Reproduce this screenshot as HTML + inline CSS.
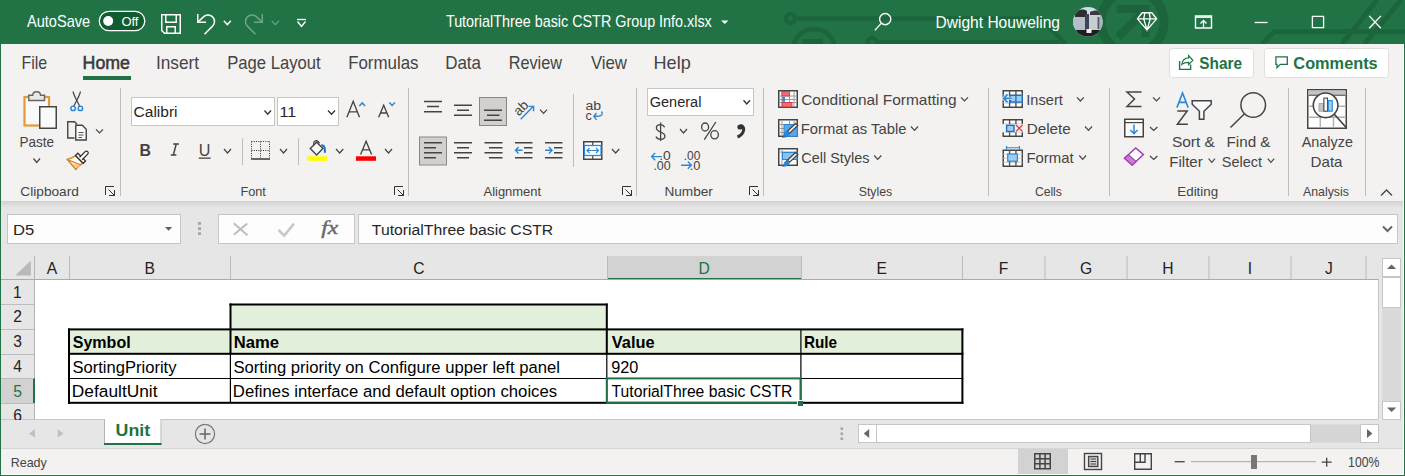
<!DOCTYPE html>
<html><head><meta charset="utf-8"><style>
html,body{margin:0;padding:0;width:1405px;height:476px;overflow:hidden;background:#f3f2f1}
svg{position:absolute;left:0;top:0;display:block}
text{font-family:"Liberation Sans",sans-serif;white-space:pre}
</style></head><body>
<svg width="1405" height="476" viewBox="0 0 1405 476">
<rect x="0" y="0" width="1405" height="44" fill="#217346" />
<g stroke="#1c643b" stroke-width="4.5" fill="none"><circle cx="790.5" cy="18.5" r="4.5"/><path d="M795,18.5 H1030"/><circle cx="814" cy="50" r="21"/><circle cx="872" cy="42.5" r="4.5"/><path d="M877,42.5 H1060"/><path d="M1040,18.5 L1066,44"/></g>
<rect x="802" y="39" width="21" height="5" fill="#1c643b"/>
<g stroke="#1c643b" fill="none"><circle cx="1132.5" cy="22" r="31.5" stroke-width="9"/><path d="M1116.7,9 H1145.5 V37" stroke-width="8"/><path d="M1145,11 L1118,37" stroke-width="8"/><path d="M1262,44 L1274,31.7 H1405" stroke-width="4.7"/><path d="M1342,44 L1377,0" stroke-width="5"/><path d="M1364.5,44 L1401,0" stroke-width="5"/></g>
<text x="27.00" y="26.80" font-size="15.70" textLength="63.18" lengthAdjust="spacingAndGlyphs" fill="#fff" font-weight="400">AutoSave</text>
<rect x="99.3" y="11.3" width="45.5" height="19.4" rx="9.7" fill="#0f5c30" stroke="#fff" stroke-width="1.3"/>
<circle cx="108.2" cy="21" r="5" fill="#fff"/>
<text x="121.42" y="26.10" font-size="13.00" textLength="17.02" lengthAdjust="spacingAndGlyphs" fill="#fff" font-weight="400">Off</text>
<path d="M161.75,14.75 H180.25 V33.25 H164.5 L161.75,30.5 Z" stroke="#fff" stroke-width="1.5" fill="none" />
<path d="M165.75,14.75 V22.25 H176.25 V14.75" stroke="#fff" stroke-width="1.5" fill="none" />
<path d="M166.75,33.25 V26.75 H175.25 V33.25" stroke="#fff" stroke-width="1.5" fill="none" />
<path d="M197.75,14 V22.25 H206" stroke="#fff" stroke-width="1.5" fill="none" />
<path d="M198.5,21.5 L203.4,16.9 A6.5,6.5 0 0 1 212.6,26.1 L204.5,34.2" stroke="#fff" stroke-width="1.5" fill="none" />
<path d="M223.8,20.8 L227.35000000000002,24.6 L230.9,20.8" stroke="#fff" stroke-width="1.4" fill="none" />
<path d="M262.25,14 V22.25 H254" stroke="#6fa587" stroke-width="1.5" fill="none" />
<path d="M261.5,21.5 L256.6,16.9 A6.5,6.5 0 0 0 247.4,26.1 L255.5,34.2" stroke="#6fa587" stroke-width="1.5" fill="none" />
<path d="M271.7,20.8 L275.35,24.6 L279,20.8" stroke="#6fa587" stroke-width="1.2" fill="none" />
<path d="M297,19.5 H306" stroke="#fff" stroke-width="1.3" fill="none" />
<path d="M297.5,21.5 L301.5,26.5 L305.5,21.5" stroke="#fff" stroke-width="1.4" fill="none" />
<text x="445.91" y="27.00" font-size="15.70" textLength="265.83" lengthAdjust="spacingAndGlyphs" fill="#fff" font-weight="400">TutorialThree basic CSTR Group Info.xlsx</text>
<path d="M721,20.5 H728.5 L724.75,24 Z" fill="#fff"/>
<circle cx="885.2" cy="19.1" r="5.6" stroke="#fff" stroke-width="1.4" fill="none"/>
<path d="M881.2,23.4 L874.8,30.4" stroke="#fff" stroke-width="1.4" fill="none" />
<text x="935.56" y="27.90" font-size="15.70" textLength="124.44" lengthAdjust="spacingAndGlyphs" fill="#fff" font-weight="400">Dwight Houweling</text>
<defs><clipPath id="av"><circle cx="1087.9" cy="21.8" r="14.7"/></clipPath><linearGradient id="avg" x1="0" y1="0" x2="0" y2="1"><stop offset="0" stop-color="#2b2f33"/><stop offset="0.25" stop-color="#a9c6d6"/><stop offset="0.45" stop-color="#c9d2d8"/><stop offset="0.8" stop-color="#8c949a"/><stop offset="1" stop-color="#1d1f22"/></linearGradient></defs>
<g clip-path="url(#av)"><rect x="1073" y="7" width="30" height="30" fill="#cfdde6"/><rect x="1073" y="15" width="30" height="16" fill="#aab6c0"/><path d="M1075,12 C1078,9 1084,9 1087,11 L1087,17 L1075,18 Z" fill="#2d2d2d"/><path d="M1090,12 C1094,10 1099,10 1102,12 L1102,15 L1090,15 Z" fill="#3a3a3a"/><rect x="1073" y="17" width="12" height="14" fill="#b4bec8"/><rect x="1085" y="14" width="4" height="17" fill="#3c4652"/><rect x="1089" y="15" width="11" height="15" fill="#c9cdd1"/><rect x="1097.5" y="17" width="2" height="12" fill="#59606a"/><rect x="1073" y="30" width="30" height="7" fill="#1e1e1e"/><rect x="1086.5" y="29" width="5" height="4" fill="#f0f0f0"/></g>
<path d="M1142.2,12.75 H1151.8 L1156.6,18.8 L1147,30 L1137.4,18.8 Z M1137.4,18.8 H1156.6 M1144.9,12.75 L1143.7,18.8 L1147,30 L1150.3,18.8 L1149.1,12.75" stroke="#fff" stroke-width="1.3" fill="none" />
<path d="M1195.5,16 H1211.5 V28 H1195.5 Z" stroke="#fff" stroke-width="1.4" fill="none" />
<path d="M1195.5,17.2 H1211.5" stroke="#fff" stroke-width="1.4" fill="none" />
<path d="M1203.5,27.5 V20.5 M1200.5,23.5 L1203.5,20.5 L1206.5,23.5" stroke="#fff" stroke-width="1.3" fill="none" />
<path d="M1254.7,22.5 H1267.6" stroke="#fff" stroke-width="1.3" fill="none" />
<path d="M1312.4,16.4 H1323.6 V27.6 H1312.4 Z" stroke="#fff" stroke-width="1.3" fill="none" />
<path d="M1369.2,15.9 L1380.9,28.2 M1380.9,15.9 L1369.2,28.2" stroke="#fff" stroke-width="1.3" fill="none" />
<rect x="0" y="44" width="1405" height="157" fill="#f3f2f1" />
<text x="21.42" y="69.00" font-size="18.20" textLength="25.72" lengthAdjust="spacingAndGlyphs" fill="#444" font-weight="400">File</text>
<text x="82.55" y="69.00" font-size="18.20" textLength="47.42" lengthAdjust="spacingAndGlyphs" fill="#3a3a3a" font-weight="400" stroke="#3a3a3a" stroke-width="0.55">Home</text>
<rect x="83" y="76" width="48" height="4" fill="#217346" />
<text x="155.95" y="69.00" font-size="18.20" textLength="43.16" lengthAdjust="spacingAndGlyphs" fill="#444" font-weight="400">Insert</text>
<text x="227.17" y="69.00" font-size="18.20" textLength="93.43" lengthAdjust="spacingAndGlyphs" fill="#444" font-weight="400">Page Layout</text>
<text x="348.15" y="69.00" font-size="18.20" textLength="70.40" lengthAdjust="spacingAndGlyphs" fill="#444" font-weight="400">Formulas</text>
<text x="445.14" y="69.00" font-size="18.20" textLength="35.90" lengthAdjust="spacingAndGlyphs" fill="#444" font-weight="400">Data</text>
<text x="508.70" y="69.00" font-size="18.20" textLength="53.28" lengthAdjust="spacingAndGlyphs" fill="#444" font-weight="400">Review</text>
<text x="590.92" y="69.00" font-size="18.20" textLength="36.08" lengthAdjust="spacingAndGlyphs" fill="#444" font-weight="400">View</text>
<text x="653.55" y="69.00" font-size="18.20" textLength="37.20" lengthAdjust="spacingAndGlyphs" fill="#444" font-weight="400">Help</text>
<rect x="1169.5" y="48.5" width="84" height="29" rx="3" fill="#fff" stroke="#e1dfdd"/>
<rect x="1264.5" y="48.5" width="124" height="29" rx="3" fill="#fff" stroke="#e1dfdd"/>
<path d="M1179.6,61 V69.4 H1190.6 V64.4" stroke="#217346" stroke-width="1.4" fill="none" />
<path d="M1181.8,64.4 C1182.6,59.6 1185,57.9 1188.6,57.9 V55.6 L1192.8,60.3 L1188.6,64.5 V62.3 C1185.6,62.3 1183.6,62.8 1181.8,64.4 Z" stroke="#217346" stroke-width="1.2" fill="none" />
<text x="1199.34" y="69.00" font-size="16.80" textLength="42.79" lengthAdjust="spacingAndGlyphs" fill="#217346" font-weight="700">Share</text>
<path d="M1275.9,56.9 H1287.3 V64.3 H1280.3 L1277,67.6 V64.3 H1275.9 Z" stroke="#217346" stroke-width="1.3" fill="none" />
<text x="1293.35" y="69.00" font-size="16.80" textLength="84.35" lengthAdjust="spacingAndGlyphs" fill="#217346" font-weight="700">Comments</text>
<rect x="24.5" y="97" width="24.5" height="28.5" fill="#fafafa" stroke="#e39a3b" stroke-width="2.2"/>
<path d="M28.75,100.5 V95.25 H32.75 C32.75,90.5 40.5,90.5 40.5,95.25 H44.5 V100.5 Z" stroke="#666" stroke-width="1.4" fill="#e8e8e8" />
<rect x="39.75" y="106.75" width="16.5" height="21.5" fill="#fafafa" stroke="#444" stroke-width="1.5"/>
<text x="19.52" y="146.50" font-size="14.40" textLength="34.62" lengthAdjust="spacingAndGlyphs" fill="#444" font-weight="400">Paste</text>
<path d="M33.5,158.5 L36.75,162.5 L40,158.5" stroke="#444" stroke-width="1.2" fill="none" />
<path d="M73,91.5 C74,96 77,100.5 79.8,106.5 M80.5,91.5 C79.5,96 76.5,100.5 73.7,106.5" stroke="#444" stroke-width="1.2" fill="none" />
<circle cx="73.1" cy="108.4" r="2.2" fill="#fff" stroke="#2b88d8" stroke-width="1.5"/><circle cx="80.4" cy="108.4" r="2.2" fill="#fff" stroke="#2b88d8" stroke-width="1.5"/>
<path d="M74.5,138 H67.75 V121.75 H74.5 L77,124.25" stroke="#444" stroke-width="1.4" fill="none" />
<path d="M75.75,125.25 H82.25 L86.25,129.25 V140 H75.75 Z" stroke="#444" stroke-width="1.4" fill="#fafafa" />
<path d="M78.5,132.5 H83.5 M78.5,135 H83.5 M78.5,137.5 H82" stroke="#555" stroke-width="1" fill="none" />
<path d="M96,129.3 L99.5,133 L103,129.3" stroke="#444" stroke-width="1.2" fill="none" />
<path d="M67.3,159.4 C70,158.5 73,157.5 75.5,155.8 L82.8,163.2 C80,165 77.5,167 75.8,169.2 Z" stroke="#d9822b" stroke-width="1.6" fill="#fff" />
<path d="M72.5,163.6 L80.2,165.2 L76.2,168.2 Z" stroke="none" stroke-width="0" fill="#f7c77a" />
<path d="M67.8,159.8 L80.8,164.8" stroke="#d9822b" stroke-width="1.3" fill="none" />
<path d="M75.5,155.5 L77.8,153.2 L85.5,161 L83.2,163.3 Z" stroke="#333" stroke-width="1.3" fill="#fff" />
<path d="M79.6,157.3 L85.2,151.6 C85.9,150.9 87,150.9 87.7,151.6 C88.4,152.3 88.4,153.4 87.7,154.1 L82.1,159.8" stroke="#333" stroke-width="1.3" fill="#fff" />
<text x="20.32" y="195.50" font-size="13.40" textLength="58.58" lengthAdjust="spacingAndGlyphs" fill="#444" font-weight="400">Clipboard</text>
<path d="M105.5,195 V186.5 H114" stroke="#333" stroke-width="1" fill="none" />
<path d="M108.5,189.5 L114.5,195.5 M114.5,190 V195.5 H109" stroke="#333" stroke-width="1" fill="none" />
<rect x="120" y="88" width="1" height="108" fill="#c0bebc" />
<rect x="131.5" y="97.5" width="143" height="28" fill="#fff" stroke="#c8c6c4"/>
<text x="133.62" y="117.30" font-size="15.30" textLength="43.95" lengthAdjust="spacingAndGlyphs" fill="#262626" font-weight="400">Calibri</text>
<path d="M264.5,110.5 L267.75,114.2 L271,110.5" stroke="#333" stroke-width="1.3" fill="none" />
<rect x="277.5" y="97.5" width="61" height="28" fill="#fff" stroke="#c8c6c4"/>
<text x="279.60" y="117.30" font-size="15.30" textLength="16.68" lengthAdjust="spacingAndGlyphs" fill="#262626" font-weight="400">11</text>
<path d="M328,110.5 L331.5,114.2 L335,110.5" stroke="#333" stroke-width="1.3" fill="none" />
<path d="M346.9,117.2 L353.2,101.3 L359.5,117.2 M349,111.8 H357.4" stroke="#444" stroke-width="1.35" fill="none" />
<path d="M359.3,105.9 L362.2,102.9 L365.1,105.9" stroke="#2b88d8" stroke-width="1.5" fill="none" />
<path d="M378.7,117.2 L383.7,105.2 L388.7,117.2 M380.5,113 H386.9" stroke="#444" stroke-width="1.35" fill="none" />
<path d="M389.3,102.5 L392.1,105.4 L394.9,102.5" stroke="#2b88d8" stroke-width="1.5" fill="none" />
<text x="139.47" y="155.60" font-size="17.00" textLength="11.48" lengthAdjust="spacingAndGlyphs" fill="#444" font-weight="700">B</text>
<path d="M173.2,144.1 H178.9 M176.2,144.1 L173.3,155.1 M170.8,155.1 H176.4" stroke="#444" stroke-width="1.5" fill="none" />
<text x="198.79" y="155.60" font-size="15.80" textLength="11.66" lengthAdjust="spacingAndGlyphs" fill="#444" font-weight="400">U</text>
<rect x="198.8" y="157.5" width="11.8" height="1.3" fill="#444" />
<path d="M224,149 L227.5,153 L231,149" stroke="#444" stroke-width="1.2" fill="none" />
<rect x="242" y="138" width="1" height="27" fill="#c0bebc" />
<g stroke="#333" stroke-width="1" stroke-dasharray="1,1.3" fill="none"><path d="M251.5,141.5 H269.5 M251.5,141.5 V158 M269.5,141.5 V158 M260.5,141.5 V158 M251.5,150.5 H269.5"/></g>
<rect x="251" y="158.2" width="19" height="1.6" fill="#444" />
<path d="M280,149 L283.5,153 L287,149" stroke="#444" stroke-width="1.2" fill="none" />
<rect x="298" y="138" width="1" height="27" fill="#c0bebc" />
<path d="M310.3,148.6 L316.6,142.3 L322.9,148.6 L316.6,154.9 Z" stroke="#444" stroke-width="1.4" fill="#fafafa" />
<path d="M313.8,145.1 V142.8 C313.8,140.6 316.8,140.2 318.2,141.6 L319.6,143.2" stroke="#444" stroke-width="1.3" fill="none" />
<path d="M321.3,145.3 C323.8,145.3 324.9,147.6 324.9,150 V152.8" stroke="#1e70c1" stroke-width="2" fill="none" />
<rect x="307" y="156.3" width="20" height="4.5" fill="#ffff00" />
<path d="M336,149 L339.65,153 L343.3,149" stroke="#444" stroke-width="1.2" fill="none" />
<path d="M360.6,154.6 L366.1,141.3 L371.6,154.6 M362.6,149.9 H369.6" stroke="#444" stroke-width="1.35" fill="none" />
<rect x="356" y="156.3" width="20" height="4.5" fill="#ff0000" />
<path d="M385,149 L388.5,153 L392,149" stroke="#444" stroke-width="1.2" fill="none" />
<text x="240.38" y="195.50" font-size="13.40" textLength="25.50" lengthAdjust="spacingAndGlyphs" fill="#444" font-weight="400">Font</text>
<path d="M394.5,195 V186.5 H403" stroke="#333" stroke-width="1" fill="none" />
<path d="M397.5,189.5 L403.5,195.5 M403.5,190 V195.5 H398" stroke="#333" stroke-width="1" fill="none" />
<rect x="408" y="88" width="1" height="108" fill="#c0bebc" />
<path d="M424,101.5 H442 M427,106.5 H439 M424,111.75 H442" stroke="#444" stroke-width="1.5" fill="none" />
<path d="M454,105.25 H472 M457,110.25 H469 M454,115.25 H472" stroke="#444" stroke-width="1.5" fill="none" />
<rect x="479.5" y="97.5" width="27" height="28" fill="#d2d0ce" stroke="#8a8886"/>
<path d="M484,110.25 H502 M487,115.25 H499.5 M484,120.25 H502" stroke="#444" stroke-width="1.5" fill="none" />
<text x="520.6" y="112.7" font-size="13.5" text-anchor="middle" fill="#444" transform="rotate(-45 520.6 107.7)">ab</text>
<path d="M520.7,119.3 L533.4,106.2 M528.5,106.4 H533.6 V111.2" stroke="#2b88d8" stroke-width="1.4" fill="none" />
<path d="M540,109.6 L543.5,113.4 L547,109.6" stroke="#444" stroke-width="1.2" fill="none" />
<rect x="573" y="94" width="1" height="73" fill="#c0bebc" />
<text x="585.44" y="109.90" font-size="12.50" textLength="15.66" lengthAdjust="spacingAndGlyphs" fill="#444" font-weight="400">ab</text>
<text x="585.49" y="119.70" font-size="12.50" textLength="6.32" lengthAdjust="spacingAndGlyphs" fill="#444" font-weight="400">c</text>
<path d="M601.5,111.5 C603.5,114 602,116.5 597,116.3 H594 M596.5,113 L593.8,116.2 L596.5,119.8" stroke="#2b88d8" stroke-width="1.4" fill="none" />
<rect x="419.5" y="137" width="27" height="28" fill="#d2d0ce" stroke="#8a8886"/>
<path d="M424,142.75 H442 M424,147.75 H436 M424,152.75 H442 M424,157.75 H436" stroke="#444" stroke-width="1.5" fill="none" />
<path d="M454,142.75 H472 M457,147.75 H469 M454,152.75 H472 M457,157.75 H469" stroke="#444" stroke-width="1.5" fill="none" />
<path d="M484.5,142.75 H502.5 M489,147.75 H502.5 M484.5,152.75 H502.5 M489,157.75 H502.5" stroke="#444" stroke-width="1.5" fill="none" />
<path d="M515,142.75 H532.5 M524,147.75 H532.5 M524,152.75 H532.5 M515,157.75 H532.5" stroke="#444" stroke-width="1.5" fill="none" />
<path d="M522.5,150.25 H515.5 M518.5,147 L515.5,150.25 L518.5,153.5" stroke="#2b88d8" stroke-width="1.4" fill="none" />
<path d="M545,142.75 H562.5 M554,147.75 H562.5 M554,152.75 H562.5 M545,157.75 H562.5" stroke="#444" stroke-width="1.5" fill="none" />
<path d="M545,150.25 H552 M549,147 L552,150.25 L549,153.5" stroke="#2b88d8" stroke-width="1.4" fill="none" />
<rect x="583.75" y="141.75" width="18" height="17.5" fill="#fff" stroke="#444" stroke-width="1.5"/>
<path d="M592.75,141.75 V145.5 M592.75,155.5 V159.25" stroke="#444" stroke-width="1.2" fill="none" />
<rect x="584.5" y="145.5" width="16.5" height="10" fill="#fff" stroke="#2b88d8" stroke-width="1.3"/>
<path d="M587,150.5 H598.5 M589.5,148 L587,150.5 L589.5,153 M596,148 L598.5,150.5 L596,153" stroke="#2b88d8" stroke-width="1.2" fill="none" />
<path d="M612,149 L615.65,153 L619.3,149" stroke="#444" stroke-width="1.2" fill="none" />
<text x="483.50" y="195.50" font-size="13.40" textLength="57.59" lengthAdjust="spacingAndGlyphs" fill="#444" font-weight="400">Alignment</text>
<path d="M622.5,195 V186.5 H631" stroke="#333" stroke-width="1" fill="none" />
<path d="M625.5,189.5 L631.5,195.5 M631.5,190 V195.5 H626" stroke="#333" stroke-width="1" fill="none" />
<rect x="636" y="88" width="1" height="108" fill="#c0bebc" />
<rect x="647.5" y="88.5" width="106" height="27" fill="#fff" stroke="#c8c6c4"/>
<text x="649.77" y="107.20" font-size="15.30" textLength="51.61" lengthAdjust="spacingAndGlyphs" fill="#262626" font-weight="400">General</text>
<path d="M743.5,100.3 L746.75,104 L750,100.3" stroke="#333" stroke-width="1.3" fill="none" />
<path d="M664.6,127.3 C663.6,125.3 662.2,124.6 660.4,124.6 C657.9,124.6 656.4,126.1 656.4,128.1 C656.4,132.9 664.9,131.3 664.9,136 C664.9,138.2 663,139.3 660.5,139.3 C658.4,139.3 656.8,138.4 655.9,136.6 M660.6,122.6 V141" stroke="#444" stroke-width="1.3" fill="none" />
<path d="M680,129 L683.5,133 L687,129" stroke="#444" stroke-width="1.2" fill="none" />
<ellipse cx="705.1" cy="127" rx="3.5" ry="4" fill="none" stroke="#444" stroke-width="1.3"/>
<ellipse cx="714.6" cy="134.8" rx="3.8" ry="4.1" fill="none" stroke="#444" stroke-width="1.3"/>
<path d="M715.9,122 L704.3,139.6" stroke="#444" stroke-width="1.3" fill="none" />
<path d="M740.5,125.5 C743.5,125.5 744,128.5 743.5,130.5 C743,133.5 740,136 737.5,137" stroke="#333" stroke-width="3" fill="none" />
<circle cx="740" cy="127" r="2.6" fill="#333"/>
<text x="659.26" y="159.80" font-size="12.60" textLength="11.51" lengthAdjust="spacingAndGlyphs" fill="#444" font-weight="400">.0</text>
<text x="653.38" y="169.90" font-size="12.60" textLength="17.36" lengthAdjust="spacingAndGlyphs" fill="#444" font-weight="400">.00</text>
<path d="M662,156.6 H651.8 M655.2,153 L651.6,156.6 L655.2,160.2" stroke="#2b88d8" stroke-width="1.4" fill="none" />
<text x="683.73" y="159.80" font-size="12.60" textLength="16.59" lengthAdjust="spacingAndGlyphs" fill="#444" font-weight="400">.00</text>
<text x="689.65" y="169.90" font-size="12.60" textLength="10.69" lengthAdjust="spacingAndGlyphs" fill="#444" font-weight="400">.0</text>
<path d="M681,165.2 H691.2 M687.8,161.6 L691.4,165.2 L687.8,168.8" stroke="#2b88d8" stroke-width="1.4" fill="none" />
<text x="664.41" y="195.50" font-size="13.40" textLength="48.52" lengthAdjust="spacingAndGlyphs" fill="#444" font-weight="400">Number</text>
<path d="M749.5,195 V186.5 H758" stroke="#333" stroke-width="1" fill="none" />
<path d="M752.5,189.5 L758.5,195.5 M758.5,190 V195.5 H753" stroke="#333" stroke-width="1" fill="none" />
<rect x="763" y="88" width="1" height="108" fill="#c0bebc" />
<rect x="778.75" y="90.75" width="18.5" height="16.5" fill="#fff" stroke="#444" stroke-width="1.5"/>
<path d="M782,91 V107 M789.5,91 V107 M794,91 V107 M779,96 H797 M779,99.5 H797 M779,102.5 H797 " stroke="#9a9a9a" stroke-width="1" fill="none" />
<rect x="782" y="91.5" width="7.5" height="4.5" fill="#ef6a72" stroke="#d13438" stroke-width="0.8"/>
<rect x="782" y="102.5" width="10" height="4.5" fill="#ef6a72" stroke="#d13438" stroke-width="0.8"/>
<rect x="782.3" y="96.8" width="2.7" height="5" fill="#2b88d8" />
<text x="801.23" y="104.80" font-size="14.40" textLength="155.39" lengthAdjust="spacingAndGlyphs" fill="#444" font-weight="400">Conditional Formatting</text>
<path d="M961,97.3 L964.5,101 L968,97.3" stroke="#444" stroke-width="1.2" fill="none" />
<rect x="778.75" y="119.75" width="18.5" height="16.5" fill="#fff" stroke="#444" stroke-width="1.5"/>
<path d="M782,120 V136 M789.5,120 V136 M794,120 V136 M779,124.5 H797 M779,128.5 H797 M779,132.5 H797 " stroke="#9a9a9a" stroke-width="1" fill="none" />
<rect x="784" y="124.5" width="13.3" height="11.8" fill="#58a6e8" />
<rect x="784" y="124.5" width="13.3" height="11.8" fill="none" stroke="#2b88d8" stroke-width="1"/>
<path d="M797.8,125.5 L789.5999999999999,133.2 L787.4,131.2 L795.5999999999999,123.5 Z" stroke="#444" stroke-width="1.3" fill="#fff" />
<path d="M787.4,131.2 C785.0,131.7 784.3,134 784.0,135.4 C783.8,136.4 783.1999999999999,137 782.5,137.2 C786.3,137.6 789.0,135.8 789.5999999999999,133.2 Z" stroke="#1e70c1" stroke-width="0.8" fill="#2b88d8" />
<text x="800.82" y="134.00" font-size="14.40" textLength="105.57" lengthAdjust="spacingAndGlyphs" fill="#444" font-weight="400">Format as Table</text>
<path d="M911,126.5 L914.5,130.3 L918,126.5" stroke="#444" stroke-width="1.2" fill="none" />
<rect x="778.75" y="148.75" width="18.5" height="16.5" fill="#fff" stroke="#444" stroke-width="1.5"/>
<path d="M782,149 V165 M779,152 H797 " stroke="#9a9a9a" stroke-width="1" fill="none" />
<rect x="782.5" y="152.5" width="14.5" height="7" fill="#8cc2f0" />
<rect x="782.5" y="152.5" width="14.5" height="7" fill="none" stroke="#2b88d8" stroke-width="1"/>
<path d="M797.8,154.5 L789.5999999999999,162.2 L787.4,160.2 L795.5999999999999,152.5 Z" stroke="#444" stroke-width="1.3" fill="#fff" />
<path d="M787.4,160.2 C785.0,160.7 784.3,163 784.0,164.4 C783.8,165.4 783.1999999999999,166 782.5,166.2 C786.3,166.6 789.0,164.8 789.5999999999999,162.2 Z" stroke="#1e70c1" stroke-width="0.8" fill="#2b88d8" />
<text x="801.28" y="163.00" font-size="14.40" textLength="68.21" lengthAdjust="spacingAndGlyphs" fill="#444" font-weight="400">Cell Styles</text>
<path d="M874.2,155.5 L877.75,159.3 L881.3,155.5" stroke="#444" stroke-width="1.2" fill="none" />
<text x="858.75" y="195.50" font-size="13.40" textLength="33.46" lengthAdjust="spacingAndGlyphs" fill="#444" font-weight="400">Styles</text>
<rect x="988" y="88" width="1" height="108" fill="#c0bebc" />
<rect x="1003.25" y="90.75" width="19.0" height="16.5" fill="#fff" stroke="#444" stroke-width="1.5"/>
<path d="M1003.25,94.88 H1022.25 M1003.25,99.00 H1022.25 M1003.25,103.12 H1022.25 " stroke="#c8c8c8" stroke-width="1" fill="none" />
<path d="M1009.58,90.75 V107.25 M1015.92,90.75 V107.25 " stroke="#555" stroke-width="1.4" fill="none" />
<rect x="1010.6" y="95.3" width="11.6" height="6.8" fill="#9fcdf2" stroke="#1e70c1" stroke-width="1.4"/>
<path d="M1015.9,95.3 V102.1" stroke="#1e70c1" stroke-width="1.3" fill="none" />
<path d="M1011.8,98.4 H1003.8 M1007.6,94.4 L1003.6,98.4 L1007.6,102.4" stroke="#f3f2f1" stroke-width="3.2" fill="none" />
<path d="M1011.8,98.4 H1003.8 M1007.6,94.4 L1003.6,98.4 L1007.6,102.4" stroke="#2b88d8" stroke-width="1.6" fill="none" />
<text x="1026.28" y="104.80" font-size="14.40" textLength="36.61" lengthAdjust="spacingAndGlyphs" fill="#444" font-weight="400">Insert</text>
<path d="M1077,97.3 L1080.4,101 L1083.8,97.3" stroke="#444" stroke-width="1.2" fill="none" />
<rect x="1003.25" y="119.75" width="19.0" height="16.5" fill="#fff" stroke="#444" stroke-width="1.5"/>
<path d="M1003.25,123.88 H1022.25 M1003.25,128.00 H1022.25 M1003.25,132.12 H1022.25 " stroke="#c8c8c8" stroke-width="1" fill="none" />
<path d="M1009.58,119.75 V136.25 M1015.92,119.75 V136.25 " stroke="#555" stroke-width="1.4" fill="none" />
<rect x="1002" y="124.2" width="21.5" height="8" fill="#f3f2f1" />
<rect x="1006.6" y="125.3" width="7.4" height="6.2" fill="#9fcdf2" stroke="#1e70c1" stroke-width="1.4"/>
<path d="M1016,125 L1022.5,131.5 M1022.5,125 L1016,131.5" stroke="#e8414e" stroke-width="1.4" fill="none" />
<text x="1026.78" y="134.00" font-size="14.40" textLength="43.91" lengthAdjust="spacingAndGlyphs" fill="#444" font-weight="400">Delete</text>
<path d="M1085,126.5 L1088.5,130.3 L1092,126.5" stroke="#444" stroke-width="1.2" fill="none" />
<rect x="1003.25" y="150.25" width="19.0" height="16.0" fill="#fff" stroke="#444" stroke-width="1.5"/>
<path d="M1003.25,154.25 H1022.25 M1003.25,158.25 H1022.25 M1003.25,162.25 H1022.25 " stroke="#c8c8c8" stroke-width="1" fill="none" />
<path d="M1009.58,150.25 V166.25 M1015.92,150.25 V166.25 " stroke="#555" stroke-width="1.4" fill="none" />
<rect x="1007.7" y="154" width="9.7" height="7.2" fill="#9fcdf2" stroke="#2b88d8" stroke-width="1.2"/>
<path d="M1006.5,147.75 H1019.5 M1006.5,146 V149.5 M1019.5,146 V149.5" stroke="#2b88d8" stroke-width="1.2" fill="none" />
<text x="1026.41" y="163.00" font-size="14.40" textLength="47.20" lengthAdjust="spacingAndGlyphs" fill="#444" font-weight="400">Format</text>
<path d="M1079.3,155.5 L1082.65,159.3 L1086,155.5" stroke="#444" stroke-width="1.2" fill="none" />
<text x="1034.89" y="195.50" font-size="13.40" textLength="27.01" lengthAdjust="spacingAndGlyphs" fill="#444" font-weight="400">Cells</text>
<rect x="1109" y="88" width="1" height="108" fill="#c0bebc" />
<path d="M1141.5,92 H1127 L1134.5,99 L1127,106.5 H1141.5" stroke="#444" stroke-width="1.5" fill="none" />
<path d="M1153,97.3 L1156.5,101 L1160,97.3" stroke="#444" stroke-width="1.2" fill="none" />
<rect x="1124.75" y="119.25" width="18.5" height="17.5" fill="#fafafa" stroke="#444" stroke-width="1.5"/>
<path d="M1124.75,122.6 H1143.25" stroke="#444" stroke-width="1.2" fill="none" />
<path d="M1134,124.6 V133.6 M1130.4,130 L1134,133.6 L1137.6,130" stroke="#2b88d8" stroke-width="1.5" fill="none" />
<path d="M1150,127 L1153.7,130.5 L1157.4,127" stroke="#444" stroke-width="1.2" fill="none" />
<path d="M1124.5,158.3 L1135.7,148 L1143.4,154.6 L1132.2,165.1 Z" stroke="#a33fb5" stroke-width="1.5" fill="#fff" />
<path d="M1124.5,158.3 L1128.4,154.7 L1136.1,161.4 L1132.2,165.1 Z" stroke="#a33fb5" stroke-width="1.2" fill="#c77fd4" />
<path d="M1150,156 L1153.7,159.5 L1157.4,156" stroke="#444" stroke-width="1.2" fill="none" />
<path d="M1176.9,107.6 L1182.55,92.9 L1188.2,107.6 M1178.9,102.4 H1186.2" stroke="#2b88d8" stroke-width="1.6" fill="none" />
<path d="M1177.3,110.95 H1187.2 L1177.4,124.3 H1187.9" stroke="#444" stroke-width="1.5" fill="none" />
<path d="M1192.2,100.75 H1211.2 V104.2 L1203.9,111.3 V119.25 H1199.4 V111.3 L1192.2,104.2 Z" stroke="#444" stroke-width="1.5" fill="#fafafa" />
<text x="1171.90" y="147.00" font-size="14.40" textLength="42.99" lengthAdjust="spacingAndGlyphs" fill="#444" font-weight="400">Sort &amp;</text>
<text x="1169.30" y="167.20" font-size="14.40" textLength="33.46" lengthAdjust="spacingAndGlyphs" fill="#444" font-weight="400">Filter</text>
<path d="M1208.6,158.6 L1211.8,162.3 L1215,158.6" stroke="#444" stroke-width="1.2" fill="none" />
<circle cx="1253.2" cy="105" r="12.3" fill="none" stroke="#444" stroke-width="1.5"/>
<path d="M1244.5,113.7 L1230.5,127.5" stroke="#444" stroke-width="1.5" fill="none" />
<text x="1226.48" y="147.00" font-size="14.40" textLength="44.05" lengthAdjust="spacingAndGlyphs" fill="#444" font-weight="400">Find &amp;</text>
<text x="1221.85" y="167.20" font-size="14.40" textLength="40.29" lengthAdjust="spacingAndGlyphs" fill="#444" font-weight="400">Select</text>
<path d="M1267.7,158.6 L1270.95,162.3 L1274.2,158.6" stroke="#444" stroke-width="1.2" fill="none" />
<text x="1177.33" y="195.50" font-size="13.40" textLength="40.77" lengthAdjust="spacingAndGlyphs" fill="#444" font-weight="400">Editing</text>
<rect x="1288" y="88" width="1" height="108" fill="#c0bebc" />
<rect x="1307.75" y="89.75" width="38.5" height="38.5" fill="#fff" stroke="#444" stroke-width="1.5"/>
<rect x="1308.5" y="90.5" width="37" height="4.6" fill="#c4c4c4" />
<path d="M1308.5,95.25 H1345.5" stroke="#444" stroke-width="1" fill="none" />
<path d="M1308.5,106.25 H1345.5 M1308.5,117.25 H1345.5 M1320.25,95.5 V127.5 M1333.5,95.5 V127.5" stroke="#b0b0b0" stroke-width="1.4" fill="none" />
<circle cx="1325.6" cy="105.3" r="12.3" fill="#fff" stroke="#444" stroke-width="1.6"/>
<rect x="1319" y="103.6" width="4.6" height="7.6" fill="#c4c4c4" stroke="#999" stroke-width="0.8"/>
<rect x="1323.9" y="98.1" width="3.6" height="13.1" fill="#fff" stroke="#444" stroke-width="1.1"/>
<rect x="1328.3" y="100.6" width="4" height="10.6" fill="#9fcdf2" stroke="#2b88d8" stroke-width="1.1"/>
<path d="M1334.3,114.2 L1346.4,127.8" stroke="#444" stroke-width="1.7" fill="none" />
<text x="1301.80" y="147.00" font-size="14.40" textLength="51.09" lengthAdjust="spacingAndGlyphs" fill="#444" font-weight="400">Analyze</text>
<text x="1310.59" y="167.20" font-size="14.40" textLength="31.95" lengthAdjust="spacingAndGlyphs" fill="#444" font-weight="400">Data</text>
<text x="1303.00" y="195.50" font-size="13.40" textLength="45.92" lengthAdjust="spacingAndGlyphs" fill="#444" font-weight="400">Analysis</text>
<rect x="1365" y="88" width="1" height="108" fill="#c0bebc" />
<path d="M1381,195.5 L1386.5,190 L1392,195.5" stroke="#444" stroke-width="1.3" fill="none" />
<rect x="0" y="201" width="1405" height="79" fill="#e6e6e6" />
<defs><linearGradient id="sh" x1="0" y1="0" x2="0" y2="1"><stop offset="0" stop-color="#d2d2d2"/><stop offset="1" stop-color="#e6e6e6"/></linearGradient></defs>
<rect x="0" y="201" width="1405" height="7" fill="url(#sh)" />
<rect x="7.5" y="214.5" width="173" height="29" fill="#fdfdfd" stroke="#c6c6c6"/>
<text x="12.97" y="234.80" font-size="15.30" textLength="21.25" lengthAdjust="spacingAndGlyphs" fill="#262626" font-weight="400">D5</text>
<path d="M165,227 H172.2 L168.6,230.8 Z" fill="#5f5f5f"/>
<rect x="198" y="222" width="3" height="2.8" fill="#a6a6a6" />
<rect x="198" y="227.2" width="3" height="2.8" fill="#a6a6a6" />
<rect x="198" y="232.2" width="3" height="2.8" fill="#a6a6a6" />
<rect x="218.5" y="214.5" width="136" height="29" fill="#fdfdfd" stroke="#c6c6c6"/>
<path d="M233.8,223.2 L247.4,235.3 M247.2,223.4 L233.8,234.8" stroke="#bdbdbd" stroke-width="2" fill="none" />
<path d="M278.6,230 L284.2,235.6 L294,223.6" stroke="#c8c8c8" stroke-width="2.6" fill="none" />
<text x="321.3" y="233.5" font-size="19" font-style="italic" fill="#6a6a6a" stroke="#6a6a6a" stroke-width="0.45" style="font-family:'Liberation Serif'" textLength="17" lengthAdjust="spacingAndGlyphs">fx</text>
<rect x="358.5" y="214.5" width="1039" height="29" fill="#fdfdfd" stroke="#c6c6c6"/>
<text x="371.89" y="234.90" font-size="15.30" textLength="181.36" lengthAdjust="spacingAndGlyphs" fill="#262626" font-weight="400">TutorialThree basic CSTR</text>
<path d="M1383,226.5 L1387.5,231 L1392,226.5" stroke="#666" stroke-width="2" fill="none" />
<rect x="34" y="256" width="1" height="23" fill="#b4b4b4" />
<path d="M30.9,260.5 V275.6 H15.2 Z" fill="#b9b9b9"/>
<rect x="607" y="256" width="194" height="23" fill="#d2d2d2" />
<rect x="607" y="278" width="194" height="2" fill="#217346" />
<rect x="69" y="256" width="1" height="23" fill="#bcbcbc" />
<rect x="230" y="256" width="1" height="23" fill="#bcbcbc" />
<rect x="607" y="256" width="1" height="23" fill="#bcbcbc" />
<rect x="801" y="256" width="1" height="23" fill="#bcbcbc" />
<rect x="962" y="256" width="1" height="23" fill="#bcbcbc" />
<rect x="1044.5" y="256" width="1" height="23" fill="#bcbcbc" />
<rect x="1126.5" y="256" width="1" height="23" fill="#bcbcbc" />
<rect x="1208.5" y="256" width="1" height="23" fill="#bcbcbc" />
<rect x="1290.5" y="256" width="1" height="23" fill="#bcbcbc" />
<rect x="1365.5" y="256" width="1" height="23" fill="#bcbcbc" />
<rect x="0" y="279" width="1379" height="1" fill="#ababab" />
<text x="46.80" y="274.00" font-size="17.00" textLength="10.43" lengthAdjust="spacingAndGlyphs" fill="#222" font-weight="400">A</text>
<text x="144.57" y="274.00" font-size="17.00" textLength="10.43" lengthAdjust="spacingAndGlyphs" fill="#222" font-weight="400">B</text>
<text x="413.25" y="274.00" font-size="17.00" textLength="11.30" lengthAdjust="spacingAndGlyphs" fill="#222" font-weight="400">C</text>
<text x="698.60" y="274.00" font-size="17.00" textLength="11.30" lengthAdjust="spacingAndGlyphs" fill="#217346" font-weight="400">D</text>
<text x="876.49" y="274.00" font-size="17.00" textLength="10.43" lengthAdjust="spacingAndGlyphs" fill="#222" font-weight="400">E</text>
<text x="998.67" y="274.00" font-size="17.00" textLength="9.55" lengthAdjust="spacingAndGlyphs" fill="#222" font-weight="400">F</text>
<text x="1080.10" y="274.00" font-size="17.00" textLength="12.16" lengthAdjust="spacingAndGlyphs" fill="#222" font-weight="400">G</text>
<text x="1162.37" y="274.00" font-size="17.00" textLength="11.30" lengthAdjust="spacingAndGlyphs" fill="#222" font-weight="400">H</text>
<text x="1247.85" y="274.00" font-size="17.00" textLength="4.34" lengthAdjust="spacingAndGlyphs" fill="#222" font-weight="400">I</text>
<text x="1325.06" y="274.00" font-size="17.00" textLength="7.82" lengthAdjust="spacingAndGlyphs" fill="#222" font-weight="400">J</text>
<rect x="35" y="280" width="1344" height="139" fill="#fff" />
<rect x="1378" y="279" width="1" height="140" fill="#c6c6c6" />
<rect x="0" y="419" width="1379" height="1" fill="#c6c6c6" />
<rect x="0" y="280" width="34" height="139" fill="#e6e6e6" />
<rect x="34" y="280" width="1" height="139" fill="#b4b4b4" />
<rect x="0" y="378" width="34" height="25" fill="#d2d2d2" />
<rect x="33" y="378" width="2" height="25" fill="#217346" />
<rect x="1" y="304" width="33" height="1" fill="#bcbcbc" />
<rect x="1" y="329" width="33" height="1" fill="#bcbcbc" />
<rect x="1" y="354" width="33" height="1" fill="#bcbcbc" />
<rect x="1" y="378" width="33" height="1" fill="#bcbcbc" />
<rect x="1" y="403" width="33" height="1" fill="#bcbcbc" />
<text x="13.03" y="298.20" font-size="17.00" textLength="8.70" lengthAdjust="spacingAndGlyphs" fill="#222" font-weight="400">1</text>
<text x="13.26" y="322.20" font-size="17.00" textLength="8.70" lengthAdjust="spacingAndGlyphs" fill="#222" font-weight="400">2</text>
<text x="13.26" y="347.20" font-size="17.00" textLength="8.70" lengthAdjust="spacingAndGlyphs" fill="#222" font-weight="400">3</text>
<text x="13.34" y="372.20" font-size="17.00" textLength="8.70" lengthAdjust="spacingAndGlyphs" fill="#222" font-weight="400">4</text>
<text x="13.26" y="396.70" font-size="17.00" textLength="8.70" lengthAdjust="spacingAndGlyphs" fill="#217346" font-weight="400">5</text>
<text x="13.18" y="421.00" font-size="17.00" textLength="8.70" lengthAdjust="spacingAndGlyphs" fill="#222" font-weight="400">6</text>
<rect x="230" y="304" width="377" height="25" fill="#e2efda" />
<rect x="69" y="329" width="894" height="25" fill="#e2efda" />
<rect x="229.5" y="303.5" width="378" height="2" fill="#000" />
<rect x="229.5" y="303.5" width="2" height="26" fill="#000" />
<rect x="605.8" y="303.5" width="2" height="26" fill="#000" />
<rect x="68" y="328.4" width="895.4" height="2" fill="#000" />
<rect x="68" y="328.4" width="2" height="75.4" fill="#000" />
<rect x="961.4" y="328.4" width="2" height="75.4" fill="#000" />
<rect x="68" y="401.8" width="895.4" height="2" fill="#000" />
<rect x="68" y="352.8" width="895.4" height="2" fill="#000" />
<rect x="68" y="378" width="895.4" height="1" fill="#000" />
<rect x="229.5" y="329" width="2" height="25" fill="#000" />
<rect x="605.8" y="329" width="2" height="25" fill="#000" />
<rect x="800.3" y="329" width="1.2" height="25" fill="#000" />
<rect x="229.8" y="354" width="1.2" height="48" fill="#000" />
<rect x="606.2" y="354" width="1.2" height="48" fill="#000" />
<rect x="800.3" y="354" width="1.2" height="48" fill="#000" />
<text x="72.72" y="348.00" font-size="16.30" textLength="57.95" lengthAdjust="spacingAndGlyphs" fill="#000" font-weight="700">Symbol</text>
<text x="233.72" y="348.20" font-size="16.30" textLength="45.24" lengthAdjust="spacingAndGlyphs" fill="#000" font-weight="700">Name</text>
<text x="611.82" y="348.20" font-size="16.30" textLength="42.80" lengthAdjust="spacingAndGlyphs" fill="#000" font-weight="700">Value</text>
<text x="803.91" y="348.20" font-size="16.30" textLength="33.16" lengthAdjust="spacingAndGlyphs" fill="#000" font-weight="700">Rule</text>
<text x="72.45" y="373.00" font-size="16.30" textLength="104.05" lengthAdjust="spacingAndGlyphs" fill="#000" font-weight="400">SortingPriority</text>
<text x="233.45" y="373.30" font-size="16.30" textLength="326.48" lengthAdjust="spacingAndGlyphs" fill="#000" font-weight="400">Sorting priority on Configure upper left panel</text>
<text x="611.17" y="373.20" font-size="16.30" textLength="27.16" lengthAdjust="spacingAndGlyphs" fill="#000" font-weight="400">920</text>
<text x="71.81" y="396.80" font-size="16.30" textLength="85.71" lengthAdjust="spacingAndGlyphs" fill="#000" font-weight="400">DefaultUnit</text>
<text x="232.86" y="396.90" font-size="16.30" textLength="324.25" lengthAdjust="spacingAndGlyphs" fill="#000" font-weight="400">Defines interface and default option choices</text>
<text x="611.59" y="397.20" font-size="16.30" textLength="180.86" lengthAdjust="spacingAndGlyphs" fill="#000" font-weight="400">TutorialThree basic CSTR</text>
<rect x="606.8" y="378.4" width="193.7" height="24.4" fill="none" stroke="#217346" stroke-width="2"/>
<rect x="798" y="401" width="5" height="5" fill="#217346" />
<rect x="798" y="400" width="6" height="1" fill="#fff" />
<rect x="797" y="400" width="1" height="6" fill="#fff" />
<rect x="798" y="401" width="5" height="5" fill="#217346" />
<rect x="1379" y="256" width="26" height="163" fill="#e6e6e6" />
<rect x="1382" y="277" width="19" height="142" fill="#dadada" />
<rect x="1382.5" y="258.5" width="18" height="18" fill="#fff" stroke="#c6c6c6"/>
<path d="M1387,269 H1396.2 L1391.6,264.4 Z" fill="#666"/>
<rect x="1382.5" y="277.5" width="18" height="30" fill="#fff" stroke="#c6c6c6"/>
<rect x="1382.5" y="401.5" width="18" height="18" fill="#fff" stroke="#c6c6c6"/>
<path d="M1387,407.5 H1396.2 L1391.6,412.1 Z" fill="#666"/>
<rect x="0" y="420" width="1405" height="28" fill="#e6e6e6" />
<path d="M35,429.2 V437.7 L29,433.5 Z" fill="#c0c0c0"/>
<path d="M57.7,429.2 V437.7 L63.5,433.5 Z" fill="#c0c0c0"/>
<rect x="104" y="419" width="57.5" height="26" fill="#fff" />
<rect x="104" y="419" width="1" height="26" fill="#b4b4b4" />
<rect x="160.5" y="419" width="1" height="26" fill="#b4b4b4" />
<rect x="104" y="443" width="57.5" height="2" fill="#217346" />
<text x="115.63" y="435.70" font-size="17.20" textLength="34.62" lengthAdjust="spacingAndGlyphs" fill="#217346" font-weight="700">Unit</text>
<circle cx="205" cy="434" r="9.6" fill="none" stroke="#777" stroke-width="1.2"/>
<path d="M205,428.5 V439.5 M199.5,434 H210.5" stroke="#666" stroke-width="1.5" fill="none" />
<rect x="840.5" y="427.4" width="2.6" height="2.6" fill="#a6a6a6" />
<rect x="840.5" y="432.5" width="2.6" height="2.6" fill="#a6a6a6" />
<rect x="840.5" y="437.4" width="2.6" height="2.6" fill="#a6a6a6" />
<rect x="858.5" y="424.5" width="18" height="18" fill="#fff" stroke="#c6c6c6"/>
<path d="M869.2,429 V438 L863.8,433.5 Z" fill="#666"/>
<rect x="877" y="424.5" width="484" height="18" fill="#d6d6d6" />
<rect x="876.5" y="424.5" width="434" height="18" fill="#fff" stroke="#c6c6c6"/>
<rect x="1360.5" y="424.5" width="18" height="18" fill="#fff" stroke="#c6c6c6"/>
<path d="M1367,429 V438 L1372.4,433.5 Z" fill="#666"/>
<rect x="0" y="448" width="1405" height="28" fill="#f3f2f1" />
<rect x="0" y="448" width="1405" height="1" fill="#d6d6d6" />
<text x="10.70" y="466.80" font-size="13.00" textLength="36.11" lengthAdjust="spacingAndGlyphs" fill="#444" font-weight="400">Ready</text>
<rect x="1018" y="449" width="50" height="25" fill="#d2d2d2" />
<rect x="1034.75" y="453.75" width="15.5" height="15" fill="none" stroke="#444" stroke-width="1.5"/>
<path d="M1039.9,453.75 V468.75 M1045.1,453.75 V468.75 M1034.75,458.75 H1050.25 M1034.75,463.75 H1050.25" stroke="#444" stroke-width="1.5" fill="none" />
<rect x="1084.5" y="453.5" width="17" height="16" fill="none" stroke="#444" stroke-width="1.4"/>
<rect x="1088.6" y="456.5" width="9.2" height="10" fill="#d0d0d0" stroke="#444" stroke-width="1.4"/>
<path d="M1090.5,459 H1096 M1090.5,461.5 H1096 M1090.5,464 H1096" stroke="#444" stroke-width="1" fill="none" />
<path d="M1134.7,453.7 H1151.3 V469.3 H1134.7 Z M1134.7,462.2 H1145 V453.7 M1140.3,453.7 V462.2" stroke="#444" stroke-width="1.4" fill="none" />
<path d="M1174.7,461.7 H1184.7" stroke="#444" stroke-width="1.3" fill="none" />
<rect x="1191" y="461.2" width="125" height="1" fill="#a6a6a6" />
<rect x="1251" y="455" width="6" height="14" fill="#777" />
<path d="M1321.7,462.2 H1331.7 M1326.7,457.7 V466.7" stroke="#444" stroke-width="1.3" fill="none" />
<text x="1348.08" y="466.70" font-size="14.20" textLength="31.32" lengthAdjust="spacingAndGlyphs" fill="#444" font-weight="400">100%</text>
<rect x="1403" y="44" width="1" height="431" fill="#fafafa" />
<rect x="1" y="474" width="1403" height="1" fill="#fafafa" />
<rect x="0" y="44" width="1" height="432" fill="#217346" />
<rect x="1404" y="44" width="1" height="432" fill="#217346" />
<rect x="0" y="475" width="1405" height="1" fill="#217346" />
</svg></body></html>
